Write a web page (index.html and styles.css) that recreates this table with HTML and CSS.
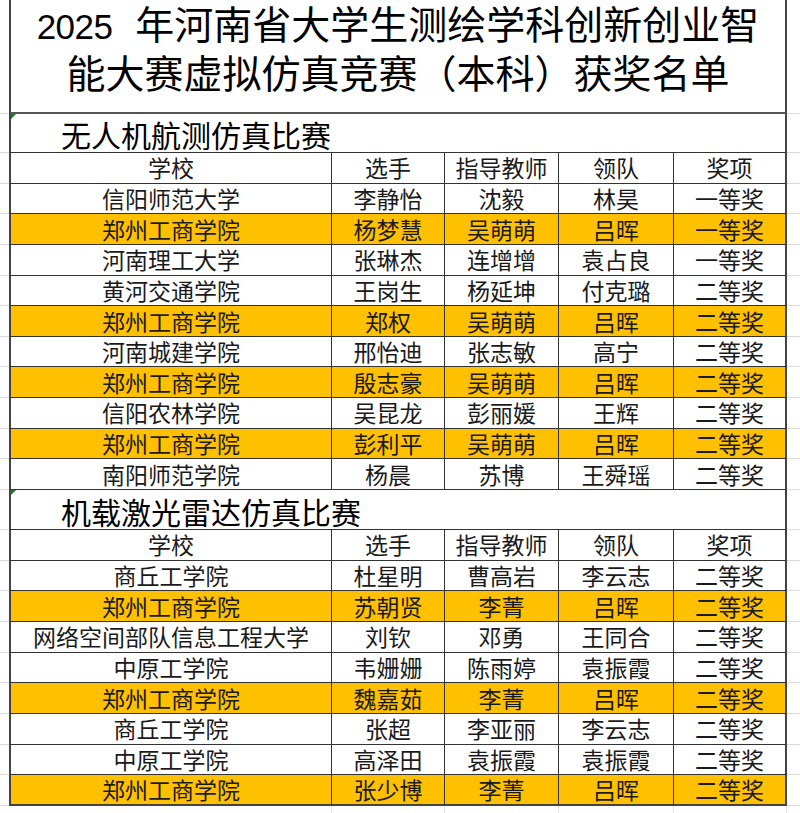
FILE: index.html
```html
<!DOCTYPE html>
<html lang="zh-CN">
<head>
<meta charset="utf-8">
<title>获奖名单</title>
<link rel="stylesheet" href="styles.css">
</head>
<body>
<div class="sheet">
  <div class="row">
    <div class="side"></div>
    <div class="c span title">
      <div class="tline"><span class="yr">2025</span> 年河南省大学生测绘学科创新创业智</div>
      <div class="tline">能大赛虚拟仿真竞赛（本科）获奖名单</div>
    </div>
    <div class="side"></div>
  </div>

  <div class="row sec-row">
    <div class="side"></div>
    <div class="c span sec mark">无人机航测仿真比赛</div>
    <div class="side"></div>
  </div>
  <div class="row data"><div class="side"></div><div class="c first">学校</div><div class="c">选手</div><div class="c">指导教师</div><div class="c">领队</div><div class="c last">奖项</div><div class="side"></div></div>
  <div class="row data"><div class="side"></div><div class="c first">信阳师范大学</div><div class="c">李静怡</div><div class="c">沈毅</div><div class="c">林昊</div><div class="c last">一等奖</div><div class="side"></div></div>
  <div class="row data hl"><div class="side"></div><div class="c first">郑州工商学院</div><div class="c">杨梦慧</div><div class="c">吴萌萌</div><div class="c">吕晖</div><div class="c last">一等奖</div><div class="side"></div></div>
  <div class="row data"><div class="side"></div><div class="c first">河南理工大学</div><div class="c">张琳杰</div><div class="c">连增增</div><div class="c">袁占良</div><div class="c last">一等奖</div><div class="side"></div></div>
  <div class="row data"><div class="side"></div><div class="c first">黄河交通学院</div><div class="c">王岗生</div><div class="c">杨延坤</div><div class="c">付克璐</div><div class="c last">二等奖</div><div class="side"></div></div>
  <div class="row data hl"><div class="side"></div><div class="c first">郑州工商学院</div><div class="c">郑权</div><div class="c">吴萌萌</div><div class="c">吕晖</div><div class="c last">二等奖</div><div class="side"></div></div>
  <div class="row data"><div class="side"></div><div class="c first">河南城建学院</div><div class="c">邢怡迪</div><div class="c">张志敏</div><div class="c">高宁</div><div class="c last">二等奖</div><div class="side"></div></div>
  <div class="row data hl"><div class="side"></div><div class="c first">郑州工商学院</div><div class="c">殷志豪</div><div class="c">吴萌萌</div><div class="c">吕晖</div><div class="c last">二等奖</div><div class="side"></div></div>
  <div class="row data"><div class="side"></div><div class="c first">信阳农林学院</div><div class="c">吴昆龙</div><div class="c">彭丽媛</div><div class="c">王辉</div><div class="c last">二等奖</div><div class="side"></div></div>
  <div class="row data hl"><div class="side"></div><div class="c first">郑州工商学院</div><div class="c">彭利平</div><div class="c">吴萌萌</div><div class="c">吕晖</div><div class="c last">二等奖</div><div class="side"></div></div>
  <div class="row data"><div class="side"></div><div class="c first">南阳师范学院</div><div class="c">杨晨</div><div class="c">苏博</div><div class="c">王舜瑶</div><div class="c last">二等奖</div><div class="side"></div></div>

  <div class="row sec-row2">
    <div class="side"></div>
    <div class="c span sec mark">机载激光雷达仿真比赛</div>
    <div class="side"></div>
  </div>
  <div class="row data"><div class="side"></div><div class="c first">学校</div><div class="c">选手</div><div class="c">指导教师</div><div class="c">领队</div><div class="c last">奖项</div><div class="side"></div></div>
  <div class="row data"><div class="side"></div><div class="c first">商丘工学院</div><div class="c">杜星明</div><div class="c">曹高岩</div><div class="c">李云志</div><div class="c last">二等奖</div><div class="side"></div></div>
  <div class="row data hl"><div class="side"></div><div class="c first">郑州工商学院</div><div class="c">苏朝贤</div><div class="c">李菁</div><div class="c">吕晖</div><div class="c last">二等奖</div><div class="side"></div></div>
  <div class="row data"><div class="side"></div><div class="c first">网络空间部队信息工程大学</div><div class="c">刘钦</div><div class="c">邓勇</div><div class="c">王同合</div><div class="c last">二等奖</div><div class="side"></div></div>
  <div class="row data"><div class="side"></div><div class="c first">中原工学院</div><div class="c">韦姗姗</div><div class="c">陈雨婷</div><div class="c">袁振霞</div><div class="c last">二等奖</div><div class="side"></div></div>
  <div class="row data hl"><div class="side"></div><div class="c first">郑州工商学院</div><div class="c">魏嘉茹</div><div class="c">李菁</div><div class="c">吕晖</div><div class="c last">二等奖</div><div class="side"></div></div>
  <div class="row data"><div class="side"></div><div class="c first">商丘工学院</div><div class="c">张超</div><div class="c">李亚丽</div><div class="c">李云志</div><div class="c last">二等奖</div><div class="side"></div></div>
  <div class="row data"><div class="side"></div><div class="c first">中原工学院</div><div class="c">高泽田</div><div class="c">袁振霞</div><div class="c">袁振霞</div><div class="c last">二等奖</div><div class="side"></div></div>
  <div class="row data hl bottom"><div class="side"></div><div class="c first">郑州工商学院</div><div class="c">张少博</div><div class="c">李菁</div><div class="c">吕晖</div><div class="c last">二等奖</div><div class="side"></div></div>

  <div class="row filler"><div class="side"></div><div class="e"></div><div class="e"></div><div class="e"></div><div class="e"></div><div class="e"></div><div class="side"></div></div>
</div>
</body>
</html>
```

FILE: styles.css
```css
html, body {
  margin: 0;
  padding: 0;
  background: #fff;
}
body {
  font-family: "Noto Sans CJK SC", sans-serif;
  color: #1a1a1a;
}
.sheet {
  width: 800px;
}
.row {
  display: grid;
  grid-template-columns: 9px 323px 113px 114px 115px 113px 1fr;
}
.side {
  border-bottom: 1px solid #dcdcdc;
  box-sizing: border-box;
}
.c {
  box-sizing: border-box;
  border-right: 1px solid #333;
  border-bottom: 1px solid #333;
  display: flex;
  align-items: center;
  justify-content: center;
  font-size: 23px;
  line-height: 1;
  white-space: nowrap;
}
.c.first {
  border-left: 2px solid #444;
}
.c.last {
  border-right: 2px solid #444;
}
.span {
  grid-column: 2 / 7;
  border-left: 2px solid #444;
  border-right: 2px solid #444;
}
.title {
  height: 114px;
  flex-direction: column;
  justify-content: flex-start;
  padding-top: 2px;
  color: #000;
  font-size: 39px;
  border-bottom: 2px solid #555;
}
.tline {
  line-height: 47.5px;
  font-family: "Liberation Sans", "Noto Sans CJK SC", sans-serif;
}
.yr {
  font-size: 35px;
  letter-spacing: -0.5px;
  margin-right: 12px;
}
.sec {
  justify-content: flex-start;
  padding-left: 50px;
  padding-top: 2px;
  font-size: 30px;
  color: #000;
  position: relative;
}
.sec-row .sec {
  height: 39px;
}
.sec-row2 .sec {
  height: 40px;
}
.mark::before {
  content: "";
  position: absolute;
  left: 0;
  top: 0;
  width: 0;
  height: 0;
  border-top: 5px solid #1e7b1e;
  border-right: 5px solid transparent;
}
.data {
  height: 30.65px;
}
.hl .c {
  background: #ffc000;
}
.bottom .c {
  border-bottom: 2px solid #444;
}
.filler {
  height: 30px;
}
.filler .e {
  border-right: 1px solid #e2e2e2;
  border-bottom: 1px solid #e2e2e2;
}
```
